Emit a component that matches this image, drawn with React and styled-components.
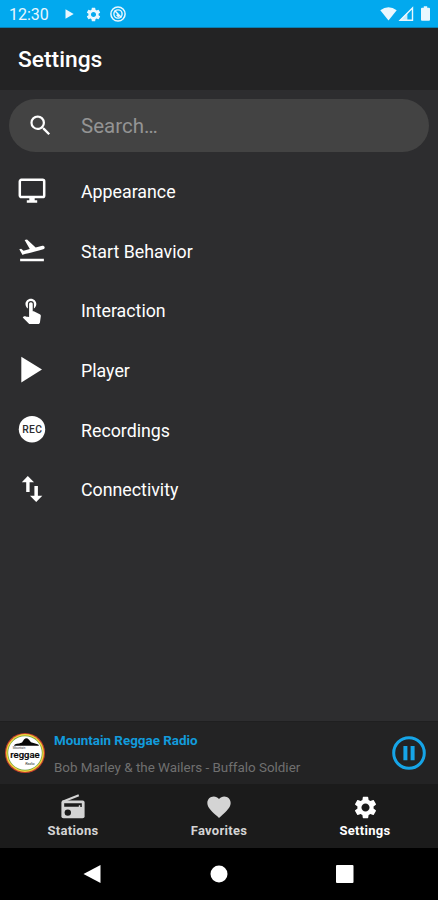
import React from "react";
import styled, { createGlobalStyle } from "styled-components";
import {
  MdFavorite,
  MdFlightTakeoff,
  MdSearch,
  MdSettings,
  MdTouchApp
} from "react-icons/md";

const GlobalStyle = createGlobalStyle`
  * {
    box-sizing: border-box;
  }
  body {
    margin: 0;
    background: #000;
  }
`

const Screen = styled.div`
  width: 438px;
  height: 900px;
  display: flex;
  flex-direction: column;
  overflow: hidden;
  background: #2d2d2f;
  color: #fff;
  font-family: Roboto, sans-serif;
  svg {
    display: block;
    flex: none;
  }
`

const StatusBar = styled.div`
  flex: none;
  height: 28px;
  padding: 0 8px 0 9px;
  display: flex;
  align-items: center;
  justify-content: space-between;
  background: #02a9ee;
  border-bottom: 1px solid #0b7fb2;
  color: #e9f7fe;
`

const StatusGroup = styled.div`
  height: 18px;
  margin-top: ${props => props.$top || "1px"};
  margin-left: ${props => props.$left || "0"};
  display: flex;
  align-items: center;
  gap: ${props => props.$gap};
`

const Clock = styled.span`
  width: 47px;
  padding-top: 1px;
  font-size: 16px;
  line-height: 20px;
`

const Header = styled.header`
  flex: none;
  height: 62px;
  padding: 1px 18px 0;
  display: flex;
  align-items: center;
  background: #232324;
`

const Title = styled.h1`
  margin: 0;
  font-size: 22.8px;
  font-weight: 500;
  line-height: 30px;
`

const SearchBox = styled.label`
  flex: none;
  height: 53px;
  margin: 9px 9px 12px;
  padding-left: 18px;
  display: flex;
  align-items: center;
  border-radius: 27px;
  background: #434343;
  input {
    width: 300px;
    margin-left: 27px;
    padding: 1px 0 0;
    border: none;
    outline: none;
    background: none;
    color: #fff;
    font-family: inherit;
    font-size: 20.5px;
  }
  input::placeholder {
    color: #949494;
    opacity: 1;
  }
`

const Menu = styled.nav`
  flex: 1;
  margin-top: -3px;
`

const MenuRow = styled.div`
  height: 59.6px;
  display: flex;
  align-items: center;
`

const MenuIcon = styled.div`
  width: 63px;
  margin-right: 18px;
  display: flex;
  justify-content: center;
`

const MenuLabel = styled.span`
  padding-top: 3px;
  font-size: 17.8px;
  line-height: 24px;
`

const PlayerBar = styled.section`
  flex: none;
  height: 63px;
  padding: 0 11px 0 5px;
  display: flex;
  align-items: center;
  background: #232324;
  border-top: 1px solid #1f1f20;
`

const TrackInfo = styled.div`
  flex: 1;
  margin-left: 9px;
  padding-top: 3px;
  display: flex;
  flex-direction: column;
  gap: 11px;
`

const StationName = styled.span`
  color: #129bdc;
  font-size: 13.4px;
  font-weight: 700;
  line-height: 16px;
`

const TrackName = styled.span`
  color: #707070;
  font-size: 13.4px;
  line-height: 16px;
`

const TabBar = styled.nav`
  flex: none;
  height: 64px;
  display: flex;
  background: #1b1b1b;
`

const Tab = styled.div`
  flex: 1;
  padding-top: 9px;
  display: flex;
  flex-direction: column;
  align-items: center;
  color: ${props => (props.$active ? "#fff" : "#d4d4d4")};
`

const TabIcon = styled.div`
  height: 28px;
  display: flex;
  align-items: center;
`

const TabLabel = styled.span`
  margin-top: 2px;
  font-size: 13px;
  font-weight: 700;
  line-height: 16px;
  letter-spacing: 0.3px;
`

const SystemBar = styled.div`
  flex: none;
  height: 52px;
  padding: 0 84px 0 83px;
  display: flex;
  align-items: center;
  justify-content: space-between;
  background: #000;
`

const SmallPlayIcon = () => (
  <svg width="9" height="18" viewBox="0 0 9 18" fill="currentColor">
    <path d="M0.5 4.3L8.7 9L0.5 13.7z" />
  </svg>
)

const BlockedIcon = () => (
  <svg width="16" height="16" viewBox="0 0 16 16" fill="none" stroke="currentColor">
    <circle cx="8" cy="8" r="7.1" strokeWidth="1.5" />
    <circle cx="8" cy="8" r="4.1" strokeWidth="1.4" />
    <path d="M4.6 4.4l6.8 7M6.6 8.8l2.2 2.1" strokeWidth="1.5" />
  </svg>
)

const WifiIcon = () => (
  <svg width="17" height="18" viewBox="0 0 17 18" fill="currentColor">
    <path d="M0.3 5.2Q8.5 -0.8 16.7 5.2L8.5 15.6z" />
  </svg>
)

const SignalIcon = () => (
  <svg width="16" height="18" viewBox="0 0 16 18">
    <path d="M2.2 15.2L14.5 3v12.2z" fill="none" stroke="currentColor" strokeWidth="1.4" />
    <path d="M1 15.8L9.4 7.4v8.4z" fill="currentColor" opacity="0.85" />
  </svg>
)

const BatteryIcon = () => (
  <svg width="9" height="18" viewBox="0 0 9 18" fill="currentColor">
    <path d="M2.8 1.2h3.4v1.6H8q1 0 1 1v11q0 1-1 1H1q-1 0-1-1v-11q0-1 1-1h1.8z" />
  </svg>
)

const MonitorIcon = () => (
  <svg width="28" height="26" viewBox="0 0 28 26">
    <rect x="1.8" y="1.8" width="24.4" height="17.2" rx="1.6" fill="none" stroke="currentColor" strokeWidth="2.5" />
    <path d="M11.3 19h5.4v3.3h2.5v2.4H8.8v-2.4h2.5z" fill="currentColor" />
  </svg>
)

const PlayIcon = () => (
  <svg width="27" height="28" viewBox="0 0 27 28" fill="currentColor">
    <path d="M3.3 0.8L24 13.6L3.3 26.4z" />
  </svg>
)

const RecIcon = () => (
  <svg width="28" height="28" viewBox="0 0 28 28">
    <circle cx="14" cy="14.2" r="13.2" fill="#fff" />
    <text x="14.3" y="17.9" textAnchor="middle" fill="#2d2d2f" fontFamily="Roboto" fontSize="10.3" fontWeight="500" letterSpacing="0.4">REC</text>
  </svg>
)

const ArrowsIcon = () => (
  <svg width="22" height="28" viewBox="0 0 22 28" fill="currentColor">
    <path d="M6.8 1L13 7.300H8.600V17H5.200V7.300H0.800zM15.200 27L9 20.700h4.400V11h3.500v9.700h4.400z" />
  </svg>
)

const RadioIcon = () => (
  <svg width="24" height="26" viewBox="0 0 24 26">
    <path d="M1.5 7.8L17.8 1.2" stroke="currentColor" strokeWidth="2" />
    <rect x="0.4" y="6.4" width="23.2" height="17.8" rx="2" fill="currentColor" />
    <path d="M3.2 9.2h17.6v3.8h-1.500v-1.700h-1.500v1.400H3.200z" fill="#1b1b1b" />
    <circle cx="6.8" cy="18.6" r="3.2" fill="#1b1b1b" />
  </svg>
)

const StationLogo = () => (
  <svg width="40" height="42" viewBox="0 0 40 42">
    <circle cx="20" cy="21" r="20" fill="#c8412c" />
    <circle cx="20" cy="21" r="18.9" fill="#f0d33c" />
    <circle cx="20" cy="21" r="17.5" fill="#6fa040" />
    <circle cx="20" cy="21" r="16.8" fill="#fff" />
    <path d="M9 13.8q0-1.8 5-2.3l3-1 2-3q2.5-2.5 5 .3l2 2.500 5 1.500q3 .5 3 2z" fill="#080808" />
    <text x="14" y="17.200" textAnchor="middle" fontFamily="Roboto" fontSize="3" fill="#333">Mountain</text>
    <text x="20" y="26.300" textAnchor="middle" fontFamily="Roboto" fontSize="9.500" fontWeight="500" fill="#080808" stroke="#080808" strokeWidth="0.2">reggae</text>
    <text x="25" y="33.200" textAnchor="middle" fontFamily="Roboto" fontSize="3.800" fontStyle="italic" fill="#222">Radio</text>
  </svg>
)

const PauseIcon = () => (
  <svg width="36" height="36" viewBox="0 0 36 36" fill="#16a5e8">
    <circle cx="18" cy="18" r="15.3" fill="none" stroke="#16a5e8" strokeWidth="3" />
    <path d="M12.4 11h4v14.2h-4zM19.6 11h4v14.2h-4z" />
  </svg>
)

const menu = [
  { label: "Appearance", icon: <MonitorIcon /> },
  { label: "Start Behavior", icon: <MdFlightTakeoff size={30} /> },
  { label: "Interaction", icon: <MdTouchApp size={29} /> },
  { label: "Player", icon: <PlayIcon /> },
  { label: "Recordings", icon: <RecIcon /> },
  { label: "Connectivity", icon: <ArrowsIcon /> }
]

const tabs = [
  { label: "Stations", icon: <RadioIcon /> },
  { label: "Favorites", icon: <MdFavorite size={28} /> },
  { label: "Settings", icon: <MdSettings size={27} />, active: true }
]

export default function App() {
  return (
    <Screen>
      <GlobalStyle />
      <StatusBar>
        <StatusGroup $gap="9px">
          <Clock>12:30</Clock>
          <SmallPlayIcon />
          <StatusGroup $gap="8px" $top="0" $left="2px">
            <MdSettings size={17} />
            <BlockedIcon />
          </StatusGroup>
        </StatusGroup>
        <StatusGroup $gap="1px">
          <WifiIcon />
          <StatusGroup $gap="7px" $top="0">
            <SignalIcon />
            <BatteryIcon />
          </StatusGroup>
        </StatusGroup>
      </StatusBar>
      <Header>
        <Title>Settings</Title>
      </Header>
      <SearchBox>
        <MdSearch size={27} />
        <input type="text" placeholder="Search…" />
      </SearchBox>
      <Menu>
        {menu.map(item => (
          <MenuRow key={item.label}>
            <MenuIcon>{item.icon}</MenuIcon>
            <MenuLabel>{item.label}</MenuLabel>
          </MenuRow>
        ))}
      </Menu>
      <PlayerBar>
        <StationLogo />
        <TrackInfo>
          <StationName>Mountain Reggae Radio</StationName>
          <TrackName>Bob Marley &amp; the Wailers - Buffalo Soldier</TrackName>
        </TrackInfo>
        <PauseIcon />
      </PlayerBar>
      <TabBar>
        {tabs.map(tab => (
          <Tab key={tab.label} $active={tab.active}>
            <TabIcon>{tab.icon}</TabIcon>
            <TabLabel>{tab.label}</TabLabel>
          </Tab>
        ))}
      </TabBar>
      <SystemBar>
        <svg width="18" height="20" viewBox="0 0 18 20" fill="#fff">
          <path d="M0.5 10L17.5 1v18z" />
        </svg>
        <svg width="18" height="18" viewBox="0 0 18 18" fill="#fff">
          <circle cx="9" cy="9" r="8.5" />
        </svg>
        <svg width="18" height="18" viewBox="0 0 18 18" fill="#fff">
          <rect width="17.5" height="18" rx="1" />
        </svg>
      </SystemBar>
    </Screen>
  )
}
